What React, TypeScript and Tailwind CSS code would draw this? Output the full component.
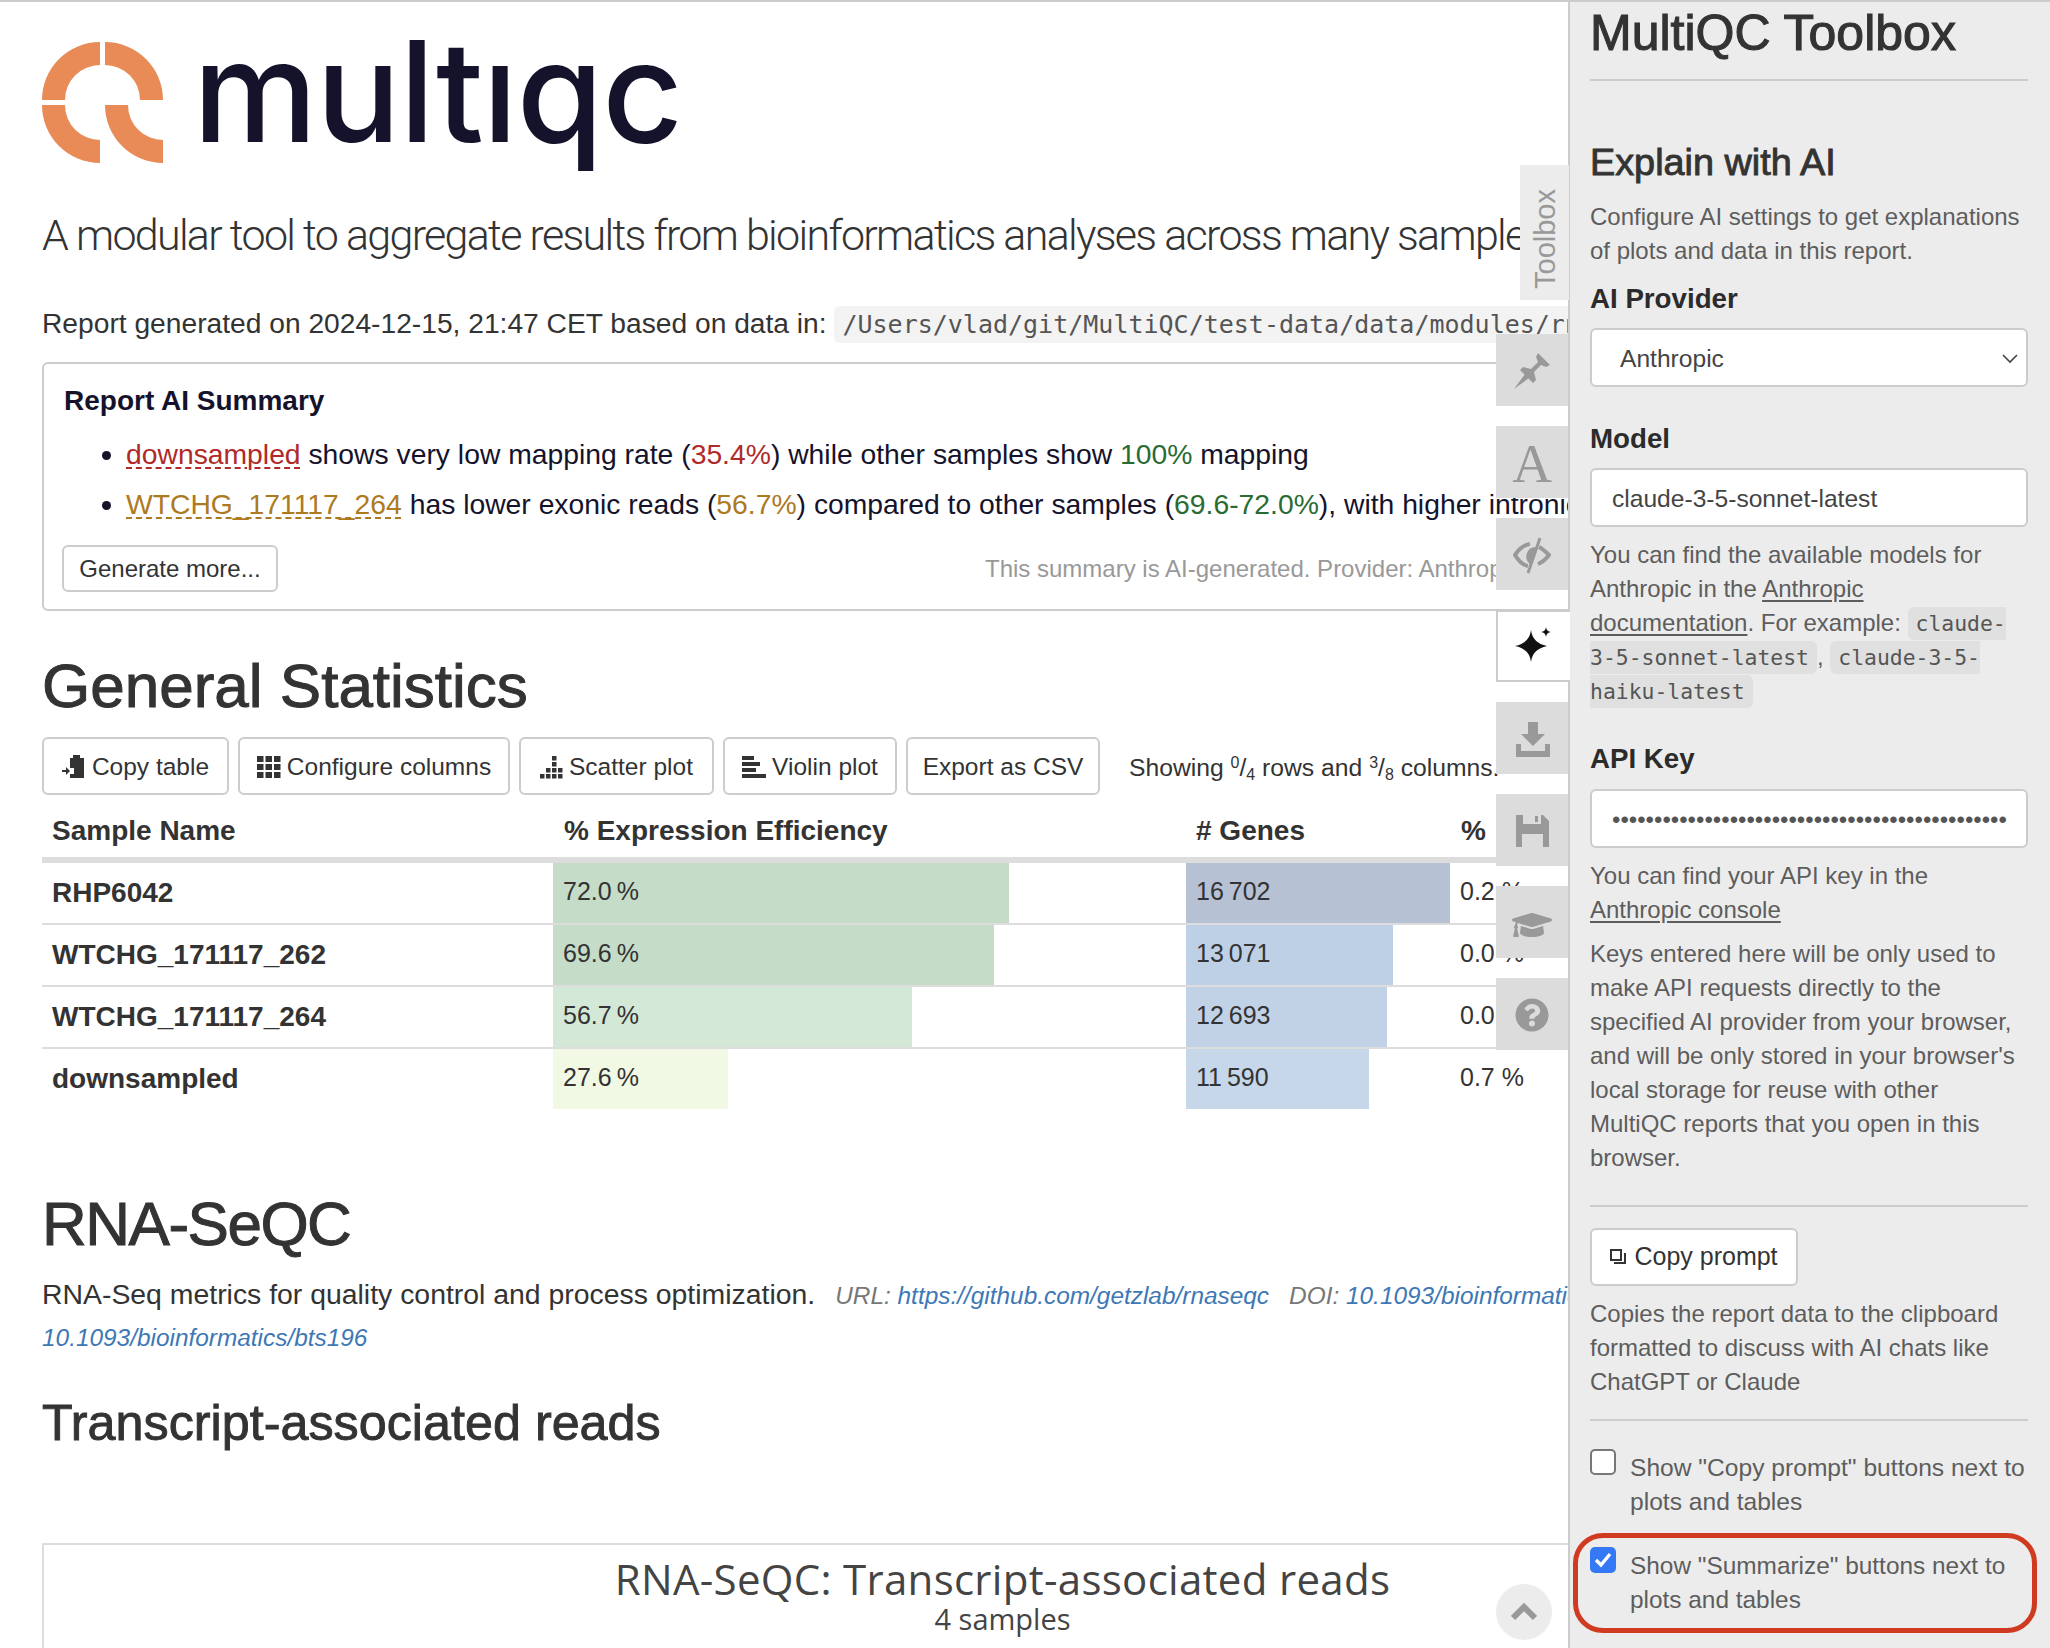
import React from 'react';
import { FaGraduationCap, FaQuestionCircle } from 'react-icons/fa';

const rows = [
  { name: 'RHP6042', eff: 72.0, effBg: 'bg-[#c4dcc8]', genes: 16702, genesBg: 'bg-[#b6c1d3]', last: '0.2 %' },
  { name: 'WTCHG_171117_262', eff: 69.6, effBg: 'bg-[#c4dcc8]', genes: 13071, genesBg: 'bg-[#bed0e5]', last: '0.0 %' },
  { name: 'WTCHG_171117_264', eff: 56.7, effBg: 'bg-[#d3e8d6]', genes: 12693, genesBg: 'bg-[#c1d2e7]', last: '0.0 %' },
  { name: 'downsampled', eff: 27.6, effBg: 'bg-[#f1f8e3]', genes: 11590, genesBg: 'bg-[#c6d7e9]', last: '0.7 %' },
];

const fmtGenes = (n: number) => `${Math.floor(n / 1000)}\u2009${String(n % 1000).padStart(3, '0')}`;

function Logo() {
  return (
    <div className="flex h-[121px] items-center">
      <svg width="121" height="121" viewBox="0 0 121 121" fill="#e88b57" className="shrink-0">
        <path d="M58 0 V23 A35 35 0 0 0 23 58 H0 A58 58 0 0 1 58 0 Z" />
        <path d="M63 0 A58 58 0 0 1 121 58 H98 A35 35 0 0 0 63 23 Z" />
        <path d="M0 63 H23 A35 35 0 0 0 58 98 V121 A58 58 0 0 1 0 63 Z" />
        <path d="M63 63 H86 A35 35 0 0 0 121 98 V121 A58 58 0 0 1 63 63 Z" />
      </svg>
      <span className="ml-[30px] self-start font-['Inter',sans-serif] text-[140px] leading-[99px] font-medium tracking-[-1px] text-[#15132b]">
        multıqc
      </span>
    </div>
  );
}

function CopyTableIcon() {
  return (
    <svg width="24" height="24" viewBox="0 0 24 24" fill="currentColor">
      <path d="M11 3V0h7v3h4v20H8v-4h4v-6H8V3z" />
      <path d="M0 15h4v-3l4 4-4 4v-3H0z" />
    </svg>
  );
}

function GridIcon() {
  return (
    <svg width="24" height="22" viewBox="0 0 24 22" fill="currentColor">
      {[0, 8, 16].map((y) =>
        [0, 8.5, 17].map((x) => <rect key={`${x}-${y}`} x={x} y={y} width="6.5" height="6" />),
      )}
    </svg>
  );
}

function ScatterIcon() {
  const dots = [[12, 0], [12, 6], [6, 12], [12, 12], [18, 12], [0, 18], [6, 18], [12, 18], [18, 18]];
  return (
    <svg width="23" height="23" viewBox="0 0 23 23" fill="currentColor">
      {dots.map(([x, y]) => <rect key={`${x}-${y}`} x={x} y={y} width="4.5" height="4.5" />)}
    </svg>
  );
}

function BarsIcon() {
  return (
    <svg width="24" height="22" viewBox="0 0 24 22" fill="currentColor">
      <rect x="0" y="0" width="12" height="4" />
      <rect x="0" y="6" width="18" height="4" />
      <rect x="0" y="12" width="14" height="4" />
      <rect x="0" y="18" width="24" height="4" />
    </svg>
  );
}

function TabButton({ children, active }: { children: React.ReactNode; active?: boolean }) {
  if (active) {
    return (
      <div className="flex h-[72px] w-[74px] items-center justify-center border-y-2 border-l-2 border-[#ccc] bg-white pr-[2px] text-[#111]">
        {children}
      </div>
    );
  }
  return (
    <div className="flex h-[72px] w-[72px] items-center justify-center bg-[#dcdcdc] pt-[2px] text-[#999]">{children}</div>
  );
}

function ToolbarButton({ icon, label, width }: { icon?: React.ReactNode; label: string; width: string }) {
  return (
    <button className={`flex h-[58px] items-center justify-center gap-[6px] rounded-[6px] border-2 border-[#ccc] bg-white pt-[2px] text-[24.5px] text-[#333] ${width}`}>
      {icon}
      {label}
    </button>
  );
}

function Code({ children }: { children: React.ReactNode }) {
  return (
    <code className="rounded-[6px] bg-[#e0e0e0] px-[8px] py-[4px] font-['DejaVu_Sans_Mono',monospace] text-[21.4px] leading-none text-[#555]">
      {children}
    </code>
  );
}

function Sidebar() {
  const label = 'text-[27.7px] leading-[34px] font-bold text-[#2b2b2b]';
  const para = 'text-[24px] leading-[34px] text-[#5d5d5d]';
  const field = 'flex h-[59px] items-center rounded-[6px] border-2 border-[#ccc] bg-white pt-[3px] text-[24.6px] text-[#444]';
  return (
    <aside className="relative w-[482px] shrink-0 border-l-2 border-[#ccc] bg-[#ececec] pr-[22px] pl-[20px] whitespace-nowrap">
      <h1 className="mt-[1px] text-[50px] leading-[60px] text-[#333] [-webkit-text-stroke:1.1px_#333]">MultiQC Toolbox</h1>
      <div className="mt-[16px] h-[2px] bg-[#ccc]" />
      <h2 className="mt-[58px] text-[37.8px] leading-[46px] text-[#333] [-webkit-text-stroke:0.9px_#333]">Explain with AI</h2>
      <p className={`mt-[15px] ${para}`}>
        Configure AI settings to get explanations
        <br />
        of plots and data in this report.
      </p>
      <div className={`mt-[14px] ${label}`}>AI Provider</div>
      <div className={`mt-[12px] justify-between pr-[8px] pl-[28px] ${field}`}>
        <span>Anthropic</span>
        <svg width="16" height="10" viewBox="0 0 16 10" fill="none" stroke="#444" strokeWidth="1.6">
          <path d="M1 1l7 7 7-7" />
        </svg>
      </div>
      <div className={`mt-[35px] ${label}`}>Model</div>
      <div className={`mt-[12px] pl-[20px] ${field}`}>claude-3-5-sonnet-latest</div>
      <p className={`mt-[11px] ${para}`}>
        You can find the available models for
        <br />
        Anthropic in the <span className="underline underline-offset-[3px]">Anthropic</span>
        <br />
        <span className="underline underline-offset-[3px]">documentation</span>. For example:{' '}
        <Code>
          claude-
          <br />
          3-5-sonnet-latest
        </Code>
        , {' '}
        <Code>
          claude-3-5-
          <br />
          haiku-latest
        </Code>
      </p>
      <div className={`mt-[34px] ${label}`}>API Key</div>
      <div className={`mt-[13px] pl-[20px] ${field}`}>
        <span className="text-[24px] text-[#555]">{'•'.repeat(47)}</span>
      </div>
      <p className={`mt-[11px] ${para}`}>
        You can find your API key in the
        <br />
        <span className="underline underline-offset-[3px]">Anthropic console</span>
      </p>
      <p className={`mt-[10px] ${para}`}>
        Keys entered here will be only used to
        <br />
        make API requests directly to the
        <br />
        specified AI provider from your browser,
        <br />
        and will be only stored in your browser's
        <br />
        local storage for reuse with other
        <br />
        MultiQC reports that you open in this
        <br />
        browser.
      </p>
      <div className="mt-[30px] h-[2px] bg-[#ccc]" />
      <button className="mt-[21px] flex h-[58px] w-[208px] items-center justify-center gap-[8px] rounded-[6px] border-2 border-[#ccc] bg-white text-[25px] text-[#333]">
        <svg width="16" height="16" viewBox="0 0 16 16" fill="none" stroke="#333" strokeWidth="2">
          <rect x="1" y="1" width="10" height="10" />
          <path d="M4 14h11V4" />
        </svg>
        Copy prompt
      </button>
      <p className={`mt-[11px] ${para}`}>
        Copies the report data to the clipboard
        <br />
        formatted to discuss with AI chats like
        <br />
        ChatGPT or Claude
      </p>
      <div className="mt-[20px] h-[2px] bg-[#ccc]" />
      <div className="mt-[30px] flex items-start gap-[14px]">
        <span className="-mt-[2px] h-[26px] w-[26px] shrink-0 rounded-[5px] border-2 border-[#777] bg-white" />
        <p className="text-[24.6px] leading-[34px] text-[#5d5d5d]">
          Show "Copy prompt" buttons next to
          <br />
          plots and tables
        </p>
      </div>
      <div className="mt-[30px] flex items-start gap-[14px]">
        <span className="-mt-[2px] flex h-[26px] w-[26px] shrink-0 items-center justify-center rounded-[5px] bg-[#3478f6]">
          <svg width="18" height="16" viewBox="0 0 18 16" fill="none" stroke="#fff" strokeWidth="3.4">
            <path d="M2 8l5 5 9-11" />
          </svg>
        </span>
        <p className="text-[24.4px] leading-[34px] text-[#5d5d5d]">
          Show "Summarize" buttons next to
          <br />
          plots and tables
        </p>
      </div>
    </aside>
  );
}

export default function App() {
  return (
    <div className="relative flex h-[1648px] w-[2050px] overflow-hidden border-t-2 border-[#ccc] bg-white font-['Liberation_Sans',Arial,sans-serif] text-[#333]">
      <main className="w-[1568px] shrink-0 overflow-hidden pl-[42px] whitespace-nowrap">
        <div className="mt-[40px]">
          <Logo />
        </div>
        <p className="mt-[42px] font-['Roboto',sans-serif] text-[43px] leading-[60px] font-light tracking-[-1.7px] text-[#333]">
          A modular tool to aggregate results from bioinformatics analyses across many samples
        </p>
        <p className="mt-[38px] text-[28.2px] leading-[40px]">
          Report generated on 2024-12-15, 21:47 CET based on data in:{' '}
          <code className="rounded-[6px] bg-[#f3f3f3] px-[8px] py-[4px] font-['DejaVu_Sans_Mono',monospace] text-[25px] leading-none text-[#555]">
            /Users/vlad/git/MultiQC/test-data/data/modules/rna_seqc
          </code>
        </p>

        <section className="mt-[19px] h-[249px] w-[1600px] rounded-[6px] border-2 border-[#ccc] pt-[17px] pl-[20px] text-[28.3px] text-[#15132b]">
          <h4 className="text-[28px] leading-[40px] font-bold">Report AI Summary</h4>
          <ul className="mt-[8px] list-disc pl-[62px] leading-[50px]">
            <li>
              <span className="text-[#b02a2a] underline decoration-dashed decoration-2 underline-offset-[3px]">downsampled</span> shows very low mapping rate (<span className="text-[#b02a2a]">35.4%</span>) while other samples show <span className="text-[#2a6b33]">100%</span> mapping
            </li>
            <li>
              <span className="text-[#ad7a1f] underline decoration-dashed decoration-2 underline-offset-[3px]">WTCHG_171117_264</span> has lower exonic reads (<span className="text-[#ad7a1f]">56.7%</span>) compared to other samples (<span className="text-[#2a6b33]">69.6-72.0%</span>), with higher intronic
            </li>
          </ul>
          <div className="mt-[16px] -ml-[2px] flex items-center">
            <button className="h-[47px] w-[216px] rounded-[6px] border-2 border-[#ccc] text-[24px] text-[#333]">Generate more...</button>
            <span className="ml-[707px] text-[24px] text-[#999]">This summary is AI-generated. Provider: Anthropic</span>
          </div>
        </section>

        <h2 className="mt-[35px] text-[62px] leading-[80px] text-[#333] [-webkit-text-stroke:1px_#333]">General Statistics</h2>

        <div className="mt-[11px] flex items-center gap-[9px]">
          <ToolbarButton width="w-[187px]" icon={<CopyTableIcon />} label="Copy table" />
          <ToolbarButton width="w-[272px]" icon={<GridIcon />} label="Configure columns" />
          <ToolbarButton width="w-[195px]" icon={<ScatterIcon />} label="Scatter plot" />
          <ToolbarButton width="w-[174px]" icon={<BarsIcon />} label="Violin plot" />
          <ToolbarButton width="w-[194px]" label="Export as CSV" />
          <span className="mt-[3px] ml-[20px] text-[24.7px]">
            Showing <sup className="text-[16px]">0</sup>/<sub className="text-[16px]">4</sub> rows and <sup className="text-[16px]">3</sup>/<sub className="text-[16px]">8</sub> columns.
          </span>
        </div>

        <div className="w-[1600px] text-[25px]">
          <div className="flex h-[68px] border-b-[6px] border-[#ddd] pt-[5px] text-[28px] leading-[61px] font-bold">
            <div className="w-[511px] pl-[10px]">Sample Name</div>
            <div className="w-[633px] pl-[11px]">% Expression Efficiency</div>
            <div className="w-[264px] pl-[10px]">
              # Genes
            </div>
            <div className="pl-[11px]">%</div>
          </div>
          {rows.map((r, i) => (
            <div key={r.name} className={`flex h-[62px] ${i < rows.length - 1 ? 'border-b-2 border-[#ddd]' : ''}`}>
              <div className="w-[511px] pl-[10px] text-[28px] leading-[60px] font-bold">{r.name}</div>
              <div className="w-[633px]">
                <div className={`h-[60px] pl-[10px] leading-[56px] ${r.effBg}`} style={{ width: `${r.eff}%` }}>
                  {r.eff.toFixed(1)}{'\u2009'}%
                </div>
              </div>
              <div className="w-[264px]">
                <div className={`h-[60px] pl-[10px] leading-[56px] ${r.genesBg}`} style={{ width: `${(r.genes / 16702) * 100}%` }}>
                  {fmtGenes(r.genes)}
                </div>
              </div>
              <div className="pl-[10px] leading-[56px]">{r.last}</div>
            </div>
          ))}
        </div>

        <h1 className="mt-[73px] text-[62px] leading-[80px] tracking-[-1.5px] text-[#333] [-webkit-text-stroke:1px_#333]">RNA-SeQC</h1>
        <p className="mt-[10px] text-[28.4px] leading-[40px]">
          RNA-Seq metrics for quality control and process optimization.
          <em className="ml-[20px] text-[24.4px] text-[#777]">URL: </em>
          <em className="text-[24.4px] text-[#3d78b5]">https://github.com/getzlab/rnaseqc</em>
          <em className="ml-[20px] text-[24.4px] text-[#777]">DOI: </em>
          <em className="text-[24.4px] text-[#3d78b5]">10.1093/bioinformatics/bts196</em>
        </p>
        <p className="mt-[5px] text-[24.4px] leading-[34px] text-[#3d78b5] italic">10.1093/bioinformatics/bts196</p>
        <h2 className="mt-[38px] text-[50.3px] leading-[60px] text-[#333] [-webkit-text-stroke:0.9px_#333]">Transcript-associated reads</h2>

        <section className="mt-[90px] h-[120px] w-[1919px] border-t-2 border-l-2 border-[#ddd] pt-[8px] text-center font-['Open_Sans',sans-serif] text-[#444]">
          <div className="text-[42px] leading-[52px] tracking-[0.3px]">RNA-SeQC: Transcript-associated reads</div>
          <div className="-mt-[4px] text-[29px] leading-[36px]">4 samples</div>
          <div className="mt-[14px] flex gap-[281px] pl-[242px]">
            {[0, 1, 2, 3, 4].map((t) => <span key={t} className="h-[8px] w-[2px] bg-[#eee]" />)}
          </div>
        </section>
      </main>

      <Sidebar />

      {/* toolbox side tabs hanging over the report */}
      <div className="absolute top-[163px] left-[1520px] flex h-[135px] w-[49px] items-center justify-center bg-[#ececec] pt-[12px] pl-[3px] text-[29px] text-[#999]">
        <span className="rotate-180 [writing-mode:vertical-rl]">Toolbox</span>
      </div>
      <div className="absolute top-[332px] left-[1496px] flex flex-col items-start gap-[20px]">
        <TabButton>
          <svg width="36" height="36" viewBox="0 0 36 36" fill="currentColor">
            <path d="M24 0L36 12l-4 2-5-2-7 7 2 8-3 3L6 17l3-3 8 2 7-7-2-5z" />
            <path d="M11 21L0 36l15-11z" />
          </svg>
        </TabButton>
        <TabButton>
          <span className="font-['Liberation_Serif',serif] text-[55px] leading-none">A</span>
        </TabButton>
        <TabButton>
          <svg width="38" height="38" viewBox="0 0 38 38" fill="none" stroke="currentColor" strokeWidth="4">
            <path d="M17 8C10 9 5 14 2 19c3 5 8 10 13 11" />
            <path d="M26 11c4 2 7 5 10 8-3 4-6 7-11 9" />
            <path d="M27 2L15 37" strokeWidth="3" />
            <path d="M23 11A9.5 9.5 0 0 0 17 28z" fill="currentColor" stroke="none" />
          </svg>
        </TabButton>
        <TabButton active>
          <svg width="36" height="40" viewBox="0 0 36 40" fill="currentColor">
            <path d="M16 4Q17.5 17 32 20 17.5 23 16 36 14.5 23 0 20 14.5 17 16 4Z" />
            <path d="M31 1Q31.4 5.6 36 6 31.4 6.4 31 11 30.6 6.4 26 6 30.6 5.6 31 1Z" />
          </svg>
        </TabButton>
        <TabButton>
          <svg width="34" height="35" viewBox="0 0 34 35" fill="currentColor" className="ml-[2px]">
            <path d="M12 0h10v12h7L17 24 5 12h7z" />
            <path d="M0 22h5v7h24v-7h5v13H0z" />
          </svg>
        </TabButton>
        <TabButton>
          <svg width="33" height="32" viewBox="0 0 33 32" fill="currentColor" fillRule="evenodd">
            <path d="M0 0h27l6 6v26H0zM7 0v9h18V0zM6 19v13h21V19z" />
            <rect x="19" y="1" width="3" height="6" />
          </svg>
        </TabButton>
        <TabButton>
          <FaGraduationCap size={40} className="mt-[3px]" />
        </TabButton>
        <TabButton>
          <FaQuestionCircle size={34} />
        </TabButton>
      </div>

      {/* back to top */}
      <div className="absolute top-[1582px] left-[1496px] flex h-[56px] w-[56px] items-center justify-center rounded-full bg-[#ececec]">
        <svg width="26" height="18" viewBox="0 0 26 18" fill="none" stroke="#999" strokeWidth="6">
          <path d="M2 15L13 4l11 11" />
        </svg>
      </div>

      {/* red annotation ring from the screenshot */}
      <div className="absolute top-[1531px] left-[1573px] h-[100px] w-[464px] rounded-[30px] border-[5px] border-[#d03a20]" />
    </div>
  );
}
